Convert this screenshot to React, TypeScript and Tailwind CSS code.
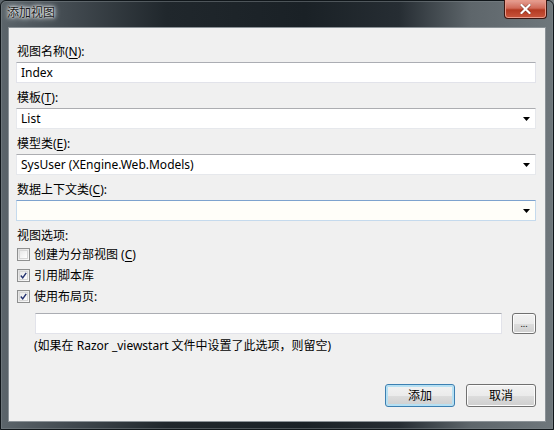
import React from "react";

const font = "font-['Noto_Sans','Noto_Sans_CJK_SC',sans-serif]";

function Arrow() {
  return (
    <svg width="7" height="4" viewBox="0 0 7 4" className="shrink-0">
      <path d="M0 0 H7 L3.5 4 Z" fill="#000" />
    </svg>
  );
}

function TextBox({ value, className = "" }: { value?: string; className?: string }) {
  return (
    <div
      className={`h-[21px] bg-white border border-[#e2e3ea] border-t-[#abadb3] flex items-center pl-[4px] text-[12px] text-black ${className}`}
    >
      {value}
    </div>
  );
}

function Combo({ value, focused }: { value?: string; focused?: boolean }) {
  return (
    <div
      className={`h-[21px] border flex items-center pl-[4px] pr-[5px] text-[12px] text-black ${
        focused
          ? "bg-[#fffef9] border-[#c5daed] border-t-[#7da2ce]"
          : "bg-white border-[#e6e8ec] border-t-[#acadb1]"
      }`}
    >
      <span className="flex-1">{value}</span>
      <Arrow />
    </div>
  );
}

function Check({ checked }: { checked?: boolean }) {
  return (
    <div className="w-[13px] h-[13px] border border-[#8e8f8f] bg-gradient-to-br from-[#e0e0e0] to-[#fbfbfb] p-[1px] shrink-0">
      <div className="w-full h-full border border-[#d7d7d7] bg-gradient-to-br from-[#e8e8e8] to-[#ffffff] flex items-center justify-center">
        {checked && (
          <svg width="9" height="9" viewBox="0 0 9 9">
            <path d="M1 4.5 L3.5 7.5 L8 1" stroke="#22306e" strokeWidth="1.8" fill="none" />
          </svg>
        )}
      </div>
    </div>
  );
}

function Label({ children, className = "" }: { children: React.ReactNode; className?: string }) {
  return (
    <div className={`h-[16px] leading-[16px] text-[12px] text-black pl-[1px] ${className}`}>{children}</div>
  );
}

function U({ children }: { children: React.ReactNode }) {
  return <span className="underline underline-offset-2">{children}</span>;
}

function Btn({ children, primary }: { children: React.ReactNode; primary?: boolean }) {
  return (
    <div
      className={`w-[70px] h-[23px] rounded-[3px] border flex items-center justify-center text-[12px] text-black ${
        primary
          ? "border-[#3c7fb1] shadow-[inset_0_0_0_2px_#b6e0f3]"
          : "border-[#707070] shadow-[inset_0_0_0_1px_#fcfcfc]"
      }`}
      style={{
        background: "linear-gradient(to bottom,#f2f2f2 0%,#ebebeb 50%,#dddddd 51%,#cfcfcf 100%)",
      }}
    >
      {children}
    </div>
  );
}

export default function App() {
  return (
    <div
      className={`w-[554px] h-[430px] relative overflow-hidden flex flex-col px-[8px] pb-[8px] ${font}`}
      style={{
        background:
          "linear-gradient(to right,#5c656b 0%,#434b51 12%,#20272c 30%,#1a2126 55%,#262d33 72%,#5e666b 85%,#6f777c 100%)",
      }}
    >
      {/* outer frame lines */}
      <div className="absolute inset-0 border border-[#10161a] rounded-t-[6px] pointer-events-none" />
      <div className="absolute inset-[1px] border border-[#7d858a]/50 rounded-t-[5px] pointer-events-none" />

      {/* title bar */}
      <div className="h-[27px] shrink-0 flex items-start pt-[5px] -ml-[2px]">
        <span
          className="text-[12px] leading-[16px] text-[#1a1a1a] px-[1px]"
          style={{ textShadow: "0 0 6px #e8eef2, 0 0 4px #e8eef2, 0 0 2px #ffffff" }}
        >
          添加视图
        </span>
      </div>

      {/* close button */}
      <div
        className="absolute top-0 right-[7px] w-[43px] h-[19px] rounded-b-[4px] border border-[#3b1510] border-t-0 flex items-center justify-center shadow-[inset_0_0_0_1px_#e79a8a]"
        style={{ background: "linear-gradient(to bottom,#e6a296 0%,#d06a58 45%,#b33a22 55%,#c9553c 100%)" }}
      >
        <svg width="11" height="10" viewBox="0 0 11 10">
          <path d="M1.5 1 L9.5 9 M9.5 1 L1.5 9" stroke="#3a0d05" strokeWidth="3.2" strokeLinecap="square" opacity="0.5" />
          <path d="M1.5 1 L9.5 9 M9.5 1 L1.5 9" stroke="#ffffff" strokeWidth="2.2" strokeLinecap="square" />
        </svg>
      </div>

      {/* client area */}
      <div className="flex-1 bg-[#f0f0f0] border border-[#8b9297] flex flex-col pl-[7px] pr-[9px] pt-[16px]">
        <Label>
          视图名称(<U>N</U>):
        </Label>
        <TextBox value="Index" className="mt-[2px]" />

        <Label className="mt-[7px]">
          模板(<U>T</U>):
        </Label>
        <div className="mt-[2px]">
          <Combo value="List" />
        </div>

        <Label className="mt-[7px]">
          模型类(<U>E</U>):
        </Label>
        <div className="mt-[2px]">
          <Combo value="SysUser (XEngine.Web.Models)" />
        </div>

        <Label className="mt-[7px]">
          数据上下文类(<U>C</U>):
        </Label>
        <div className="mt-[2px]">
          <Combo focused />
        </div>

        <Label className="mt-[7px]">视图选项:</Label>
        <div className="flex flex-col pl-[1px]">
          <div className="h-[21px] flex items-center gap-[4px]">
            <Check />
            <span className="text-[12px] text-black">
              创建为分部视图 (<U>C</U>)
            </span>
          </div>
          <div className="h-[21px] flex items-center gap-[4px]">
            <Check checked />
            <span className="text-[12px] text-black">引用脚本库</span>
          </div>
          <div className="h-[21px] flex items-center gap-[4px]">
            <Check checked />
            <span className="text-[12px] text-black">使用布局页:</span>
          </div>
        </div>

        <div className="mt-[6px] pl-[19px] flex items-center gap-[10px]">
          <TextBox className="flex-1" />
          <div
            className="w-[24px] h-[21px] rounded-[3px] border border-[#707070] shadow-[inset_0_0_0_1px_#fcfcfc] flex items-end justify-center pb-[5px] text-[9px] leading-[9px] text-black"
            style={{ background: "linear-gradient(to bottom,#f2f2f2 0%,#ebebeb 50%,#dddddd 51%,#cfcfcf 100%)" }}
          >
            ...
          </div>
        </div>

        <div className="mt-[4px] pl-[18px] h-[16px] leading-[16px] text-[12px] text-black">
          (如果在 Razor _viewstart 文件中设置了此选项，则留空)
        </div>

        <div className="mt-[30px] flex justify-end gap-[11px]">
          <Btn primary>添加</Btn>
          <Btn>取消</Btn>
        </div>
      </div>
    </div>
  );
}
